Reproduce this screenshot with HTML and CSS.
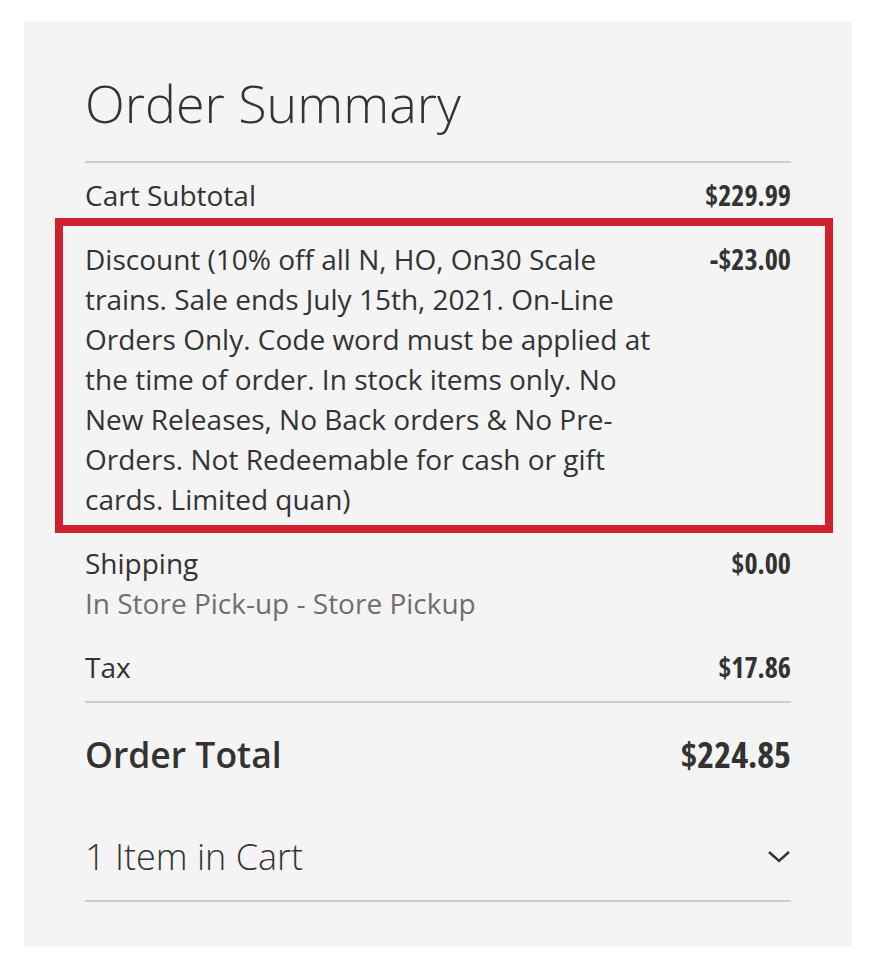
FILE: index.html
```html
<!DOCTYPE html>
<html lang="en">
<head>
  <meta charset="UTF-8" />
  <meta name="viewport" content="width=device-width, initial-scale=1.0"/>
  <title>Order Summary</title>
  <link rel="stylesheet" href="styles.css">
</head>
<body>

<div class="summary">
  <h2 class="summary-title">Order Summary</h2>

  <div class="totals">
    <div class="row">
      <div class="label">Cart Subtotal</div>
      <div class="amount">$229.99</div>
    </div>

    <div class="row discount">
      <div class="label">Discount (10% off all N, HO, On30 Scale trains. Sale ends July 15th, 2021. On-Line Orders Only. Code word must be applied at the time of order. In stock items only. No New Releases, No Back orders &amp; No Pre-Orders. Not Redeemable for cash or gift cards. Limited quan)</div>
      <div class="amount">-$23.00</div>
    </div>

    <div class="row">
      <div class="label">
        Shipping
        <div class="method">In Store Pick-up - Store Pickup</div>
      </div>
      <div class="amount">$0.00</div>
    </div>

    <div class="row">
      <div class="label">Tax</div>
      <div class="amount">$17.86</div>
    </div>

    <div class="row grand">
      <div class="label">Order Total</div>
      <div class="amount">$224.85</div>
    </div>
  </div>

  <div class="cart-items">
    <span>1 Item in Cart</span>
    <svg class="chevron" width="24" height="14" viewBox="0 0 24 14">
      <path d="M2 2 L12 11 L22 2" fill="none" stroke="#333" stroke-width="2.4"/>
    </svg>
  </div>
</div>

</body>
</html>
```

FILE: styles.css
```css
body {
  font-family: "Open Sans", Arial, sans-serif;
  margin: 0;
  background: #fff;
  color: #333;
}

.summary {
  margin: 22px 24px;
  padding: 0 61px 44px;
  background: #f4f4f4;
}

.summary-title {
  margin: 0;
  padding: 50px 0 27px;
  font-size: 52px;
  font-weight: 300;
  line-height: 62px;
  border-bottom: 2px solid #ccc;
}

.row {
  display: flex;
  justify-content: space-between;
  align-items: flex-start;
  padding: 12px 0;
  font-size: 28px;
  line-height: 40px;
}

.label {
  max-width: 585px;
}

.amount {
  font-size: 28px;
  font-weight: 700;
  font-stretch: 80%;
  white-space: nowrap;
}

.method {
  color: #6f6f6f;
}

/* highlighted discount row */
.discount {
  position: relative;
}

.discount::after {
  content: "";
  position: absolute;
  top: -9px;
  left: -30px;
  right: -42px;
  bottom: -2px;
  border: 8px solid #cf202e;
}

.grand {
  align-items: baseline;
  margin-top: 2px;
  padding: 31px 0 20px;
  border-top: 2px solid #ccc;
}

.grand .label {
  font-size: 35.5px;
  font-weight: 600;
}

.grand .amount {
  font-size: 36px;
}

.cart-items {
  display: flex;
  justify-content: space-between;
  align-items: center;
  padding: 42px 0 23px;
  font-size: 36px;
  font-weight: 300;
  line-height: 40px;
  border-bottom: 2px solid #ccc;
}
```
